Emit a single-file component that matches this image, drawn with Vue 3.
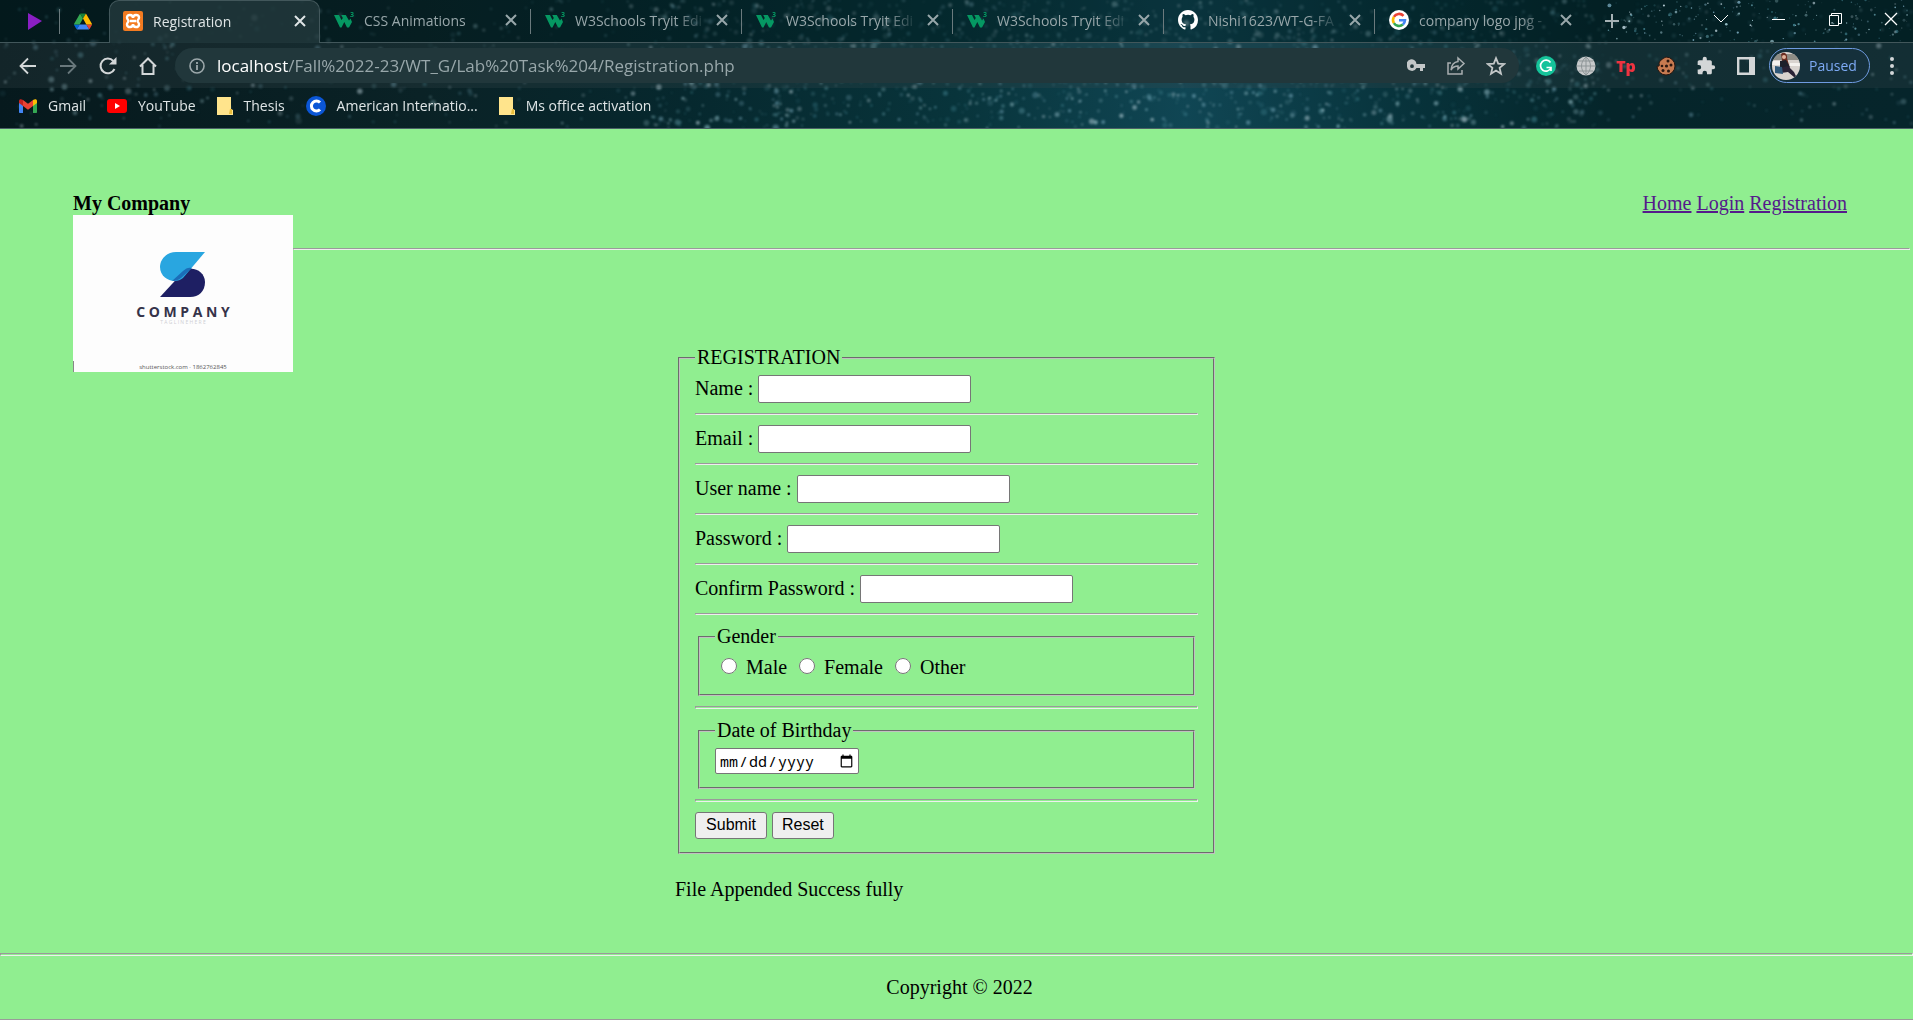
<script setup>
import { ref } from 'vue'

let seed = 20221
const rand = () => {
  seed = (seed * 16807) % 2147483647
  return seed / 2147483647
}
const tones = ['#a9d3dc', '#5f98a4', '#7fb0c4', '#3f7f8c', '#c9dfe8']
const makeStars = (count, minR, spanR, top, bottom, soft, from = 0, to = 100) =>
  Array.from({ length: count }, (_, i) => ({
    x: (from + rand() * (to - from)).toFixed(2) + '%',
    y: (top + rand() * (bottom - top)).toFixed(1),
    r: (minR + rand() * rand() * spanR).toFixed(2),
    o: (0.1 + rand() * soft).toFixed(2),
    c: tones[i % tones.length],
  }))
const softStars = [
  ...makeStars(900, 1, 2.4, 0, 128, 0.36),
  ...makeStars(1300, 1, 2.4, 0, 128, 0.45, 34, 84),
]
const sharpStars = makeStars(200, 0.5, 1.6, 0, 42, 0.8, 84, 100)

const tabs = [
  { icon: 'xampp', title: 'Registration', active: true },
  { icon: 'w3', title: 'CSS Animations' },
  { icon: 'w3', title: 'W3Schools Tryit Edi', faded: true },
  { icon: 'w3', title: 'W3Schools Tryit Edi', faded: true },
  { icon: 'w3', title: 'W3Schools Tryit Edi', faded: true },
  { icon: 'github', title: 'Nishi1623/WT-G-FA', faded: true },
  { icon: 'google', title: 'company logo jpg -', faded: true },
]

const fields = [
  { id: 'name', label: 'Name :', type: 'text' },
  { id: 'email', label: 'Email :', type: 'text' },
  { id: 'username', label: 'User name :', type: 'text' },
  { id: 'password', label: 'Password :', type: 'password' },
  { id: 'confirm', label: 'Confirm Password :', type: 'password' },
]
const genders = ['Male', 'Female', 'Other']
const gender = ref('')
</script>

<template>
  <div class="window">
    <header class="chrome">
      <svg class="sky" aria-hidden="true">
        <g class="soft">
          <circle v-for="(s, i) in softStars" :key="i" :cx="s.x" :cy="s.y" :r="s.r" :fill="s.c" :opacity="s.o" />
        </g>
        <rect class="strip" x="0" y="0" width="100%" height="42" />
        <circle v-for="(s, i) in sharpStars" :key="'s' + i" :cx="s.x" :cy="s.y" :r="s.r" :fill="s.c" :opacity="s.o" />
      </svg>

      <div class="tabstrip">
        <div class="pinned">
          <button class="pin" aria-label="Pinned video tab">
            <svg width="20" height="20" viewBox="0 0 20 20"><path d="M3 2l14 8-14 9z" fill="#8a1fc4" /></svg>
          </button>
          <button class="pin" aria-label="Pinned drive tab">
            <svg width="18" height="17" viewBox="0 0 87.3 78">
              <path d="M6.6 66.85l3.85 6.65c.8 1.4 1.95 2.5 3.3 3.3L27.5 53H0c0 1.55.4 3.1 1.2 4.5z" fill="#0066da" />
              <path d="M43.65 25L29.9 1.2c-1.35.8-2.5 1.9-3.3 3.3L1.2 48.5C.4 49.9 0 51.45 0 53h27.5z" fill="#34a853" />
              <path d="M43.65 25L57.4 1.2C56.05.4 54.5 0 52.9 0H34.4c-1.6 0-3.15.45-4.5 1.2z" fill="#188038" />
              <path d="M59.8 53H27.5L13.75 76.8c1.35.8 2.9 1.2 4.5 1.2h50.8c1.6 0 3.15-.45 4.5-1.2z" fill="#4285f4" />
              <path d="M73.55 76.8c1.35-.8 2.5-1.9 3.3-3.3l9.25-16c.8-1.4 1.2-2.95 1.2-4.5H59.8z" fill="#ea4335" />
              <path d="M73.4 26.5l-12.7-22c-.8-1.4-1.95-2.5-3.3-3.3L43.65 25 59.8 53h27.45c0-1.55-.4-3.1-1.2-4.5z" fill="#ffba00" />
            </svg>
          </button>
        </div>
        <div class="tabs">
          <div v-for="(t, i) in tabs" :key="i" class="tab" :class="{ active: t.active }">
            <svg v-if="t.icon === 'xampp'" width="20" height="20" viewBox="0 0 20 20">
              <rect width="20" height="20" rx="2" fill="#f37b21" />
              <path d="M10 7C10 3 4 3 4 6.500c0 2 1.500 2.500 1.500 3.500S4 11.500 4 13.500C4 17 10 17 10 13M10 7c0-4 6-4 6-.5 0 2-1.500 2.500-1.500 3.500s1.500 1.500 1.500 3.500c0 3.500-6 3.500-6-.5M7 10h6" fill="none" stroke="#fff" stroke-width="2.400" />
            </svg>
            <svg v-else-if="t.icon === 'w3'" width="20" height="20" viewBox="0 0 20 20">
              <path d="M0 5h5l2.500 5L8.800 8 7.200 5h4.600L15 10.500l1.500-2L18 12l-3 5.500h-2L10.300 12 7.500 17.500H6z" fill="#059862" />
              <text x="16" y="7" fill="#059862" class="three">3</text>
            </svg>
            <svg v-else-if="t.icon === 'github'" width="20" height="20" viewBox="0 0 16 16">
              <path fill="#fff" d="M8 0C3.580 0 0 3.580 0 8c0 3.540 2.290 6.530 5.470 7.590.4.070.55-.17.55-.38 0-.19-.01-.82-.01-1.490-2.010.37-2.530-.49-2.690-.94-.09-.23-.48-.94-.82-1.130-.28-.15-.68-.52-.01-.53.63-.01 1.080.58 1.230.82.72 1.210 1.870.87 2.330.66.070-.52.28-.87.51-1.070-1.780-.2-3.640-.89-3.640-3.950 0-.87.31-1.590.82-2.150-.08-.2-.36-1.020.08-2.120 0 0 .67-.21 2.200.82a7.600 7.600 0 014 0c1.530-1.040 2.200-.82 2.200-.82.44 1.100.16 1.920.08 2.120.51.56.82 1.270.82 2.150 0 3.070-1.870 3.750-3.650 3.950.29.25.54.73.54 1.480 0 1.070-.01 1.930-.01 2.200 0 .21.15.46.55.38A8.010 8.010 0 0016 8c0-4.420-3.580-8-8-8z" />
            </svg>
            <svg v-else width="20" height="20" viewBox="0 0 20 20">
              <circle cx="10" cy="10" r="10" fill="#fff" />
              <g fill="none" stroke-width="2.600">
                <path d="M14.500 5.800A6 6 0 004.900 6.900" stroke="#ea4335" />
                <path d="M4.900 6.900a6 6 0 000 6.200" stroke="#fbbc05" />
                <path d="M4.900 13.100a6 6 0 009 1.400" stroke="#34a853" />
                <path d="M13.900 14.500A6 6 0 0016 10.200h-6" stroke="#4285f4" />
              </g>
            </svg>
            <span class="title" :class="{ faded: t.faded }">{{ t.title }}</span>
            <button class="close" :aria-label="'Close ' + t.title">
              <svg width="12" height="12" viewBox="0 0 12 12"><path d="M1 1l10 10M11 1L1 11" stroke="currentColor" stroke-width="2" /></svg>
            </button>
          </div>
        </div>
        <div class="strip-end">
          <button class="plus" aria-label="New tab">
            <svg width="16" height="16" viewBox="0 0 16 16"><path d="M8 1v14M1 8h14" stroke="#a5b1b4" stroke-width="2" /></svg>
          </button>
          <div class="controls">
            <button aria-label="Search tabs"><svg width="16" height="16" viewBox="0 0 16 16"><path d="M1 4l7 7 7-7" fill="none" stroke="#fff" /></svg></button>
            <button aria-label="Minimize"><svg width="14" height="14" viewBox="0 0 14 14"><path d="M1 7.500h13" stroke="#fff" /></svg></button>
            <button aria-label="Restore"><svg width="14" height="14" viewBox="0 0 14 14"><path d="M1.500 3.500h9v10h-9zM3.500 3V1.500h10v10H11" fill="none" stroke="#fff" /></svg></button>
            <button aria-label="Close window"><svg width="14" height="14" viewBox="0 0 14 14"><path d="M1 1l12 12M13 1L1 13" stroke="#fff" stroke-width="1.300" /></svg></button>
          </div>
        </div>
      </div>

      <div class="toolbar">
        <div class="navigation">
          <button aria-label="Back"><svg width="18" height="18" viewBox="0 0 18 18"><path d="M17 9H2M9 1.500L1.500 9 9 16.500" fill="none" stroke="#d3d7d8" stroke-width="1.800" /></svg></button>
          <button aria-label="Forward"><svg width="18" height="18" viewBox="0 0 18 18"><path d="M1 9h15M9 1.500L16.500 9 9 16.500" fill="none" stroke="#69787c" stroke-width="1.800" /></svg></button>
          <button aria-label="Reload"><svg width="18" height="18" viewBox="0 0 18 18"><path d="M15.500 12A7.300 7.300 0 1114.300 4" fill="none" stroke="#d3d7d8" stroke-width="2" /><path d="M17.500 0v7.500H10z" fill="#d3d7d8" /></svg></button>
          <button aria-label="Home"><svg width="18" height="18" viewBox="0 0 18 18"><path d="M1 9.500L9 1.500l8 8M3.500 8v9h11V8" fill="none" stroke="#d3d7d8" stroke-width="2" /></svg></button>
        </div>
        <div class="omnibox">
          <svg width="16" height="16" viewBox="0 0 16 16"><circle cx="8" cy="8" r="7" fill="none" stroke="#9ca8ab" stroke-width="1.600" /><path d="M8 7v5M8 4v2" stroke="#9ca8ab" stroke-width="1.800" /></svg>
          <span class="url"><b>localhost</b>/Fall%2022-23/WT_G/Lab%20Task%204/Registration.php</span>
          <div class="actions">
            <button aria-label="Passwords"><svg width="18" height="18" viewBox="0 0 18 18"><path fill="#c3c7c8" fill-rule="evenodd" d="M9.500 7A5 5 0 100 9.500a5 5 0 009.500 1.500H13v3h3v-3h2V7zM5 7.300a1.900 1.900 0 110 3.800 1.900 1.900 0 010-3.800z" /></svg></button>
            <button aria-label="Share"><svg width="20" height="20" viewBox="0 0 20 20"><path d="M5 7H2v11h14v-4M12 2l6 5.500-6 5.500v-3c-3.500 0-5.500 1.500-7 4 .5-5 3-8 7-8.500z" fill="none" stroke="#a9afb1" stroke-width="1.500" /></svg></button>
            <button aria-label="Bookmark"><svg width="20" height="20" viewBox="0 0 20 20"><path d="M10 2.200l2.200 5.500 5.900.4-4.500 3.800 1.400 5.800-5-3.200-5 3.200 1.400-5.800L1.900 8.100l5.900-.4z" fill="none" stroke="#c3c7c8" stroke-width="1.800" /></svg></button>
          </div>
        </div>
        <div class="extensions">
          <button aria-label="Grammarly"><svg width="20" height="20" viewBox="0 0 20 20"><circle cx="10" cy="10" r="10" fill="#15c39a" /><path d="M14.500 6.500A5.500 5.500 0 1015 12M10.500 11.500H15V15" fill="none" stroke="#fff" stroke-width="1.700" /></svg></button>
          <button aria-label="Web extension"><svg width="20" height="20" viewBox="0 0 20 20"><circle cx="10" cy="10" r="9.500" fill="#c6c9ca" /><path d="M10 1v18M1 10h18M3 5h14M3 15h14M10 1C4 6 4 14 10 19M10 1c6 5 6 13 0 18" fill="none" stroke="#8d9597" /></svg></button>
          <button class="tp" aria-label="Tp extension">Tp</button>
          <button aria-label="Cookies"><svg width="20" height="20" viewBox="0 0 20 20"><path d="M10 1a9 9 0 109 9c-2 1-3-1-2-2 0-3-3-5-7-7z" fill="#c67a50" stroke="#2a1710" transform="matrix(-1 0 0 1 20 0)" /><g fill="#2a1710"><circle cx="12" cy="5" r="1.500" /><circle cx="15" cy="9" r="1.500" /><circle cx="10.500" cy="10" r="1.600" /><circle cx="6" cy="10" r="1.300" /><circle cx="7" cy="14.500" r="1.500" /><circle cx="12.500" cy="15" r="1.500" /></g></svg></button>
          <button aria-label="Extensions"><svg width="20" height="20" viewBox="0 0 24 24"><path fill="#d3d6d7" d="M20.500 11H19V7c0-1.100-.9-2-2-2h-4V3.500a2.500 2.500 0 00-5 0V5H4c-1.100 0-2 .9-2 2v3.800h1.500a2.700 2.700 0 010 5.400H2V20c0 1.100.9 2 2 2h3.800v-1.500a2.700 2.700 0 015.400 0V22H17c1.100 0 2-.9 2-2v-4h1.500a2.500 2.500 0 000-5z" /></svg></button>
          <button aria-label="Side panel"><svg width="18" height="18" viewBox="0 0 18 18"><path d="M1.200 1.200h15.600v15.600H1.200z" fill="none" stroke="#d3d6d7" stroke-width="2.400" /><path d="M12 1h6v16h-6z" fill="#d3d6d7" /></svg></button>
        </div>
        <button class="profile">
          <svg width="28" height="28" viewBox="0 0 28 28">
            <clipPath id="face"><circle cx="14" cy="14" r="14" /></clipPath>
            <g clip-path="url(#face)">
              <path d="M0 0h28v28H0z" fill="#d9d3cf" /><path d="M0 2h28v6H0z" fill="#8e8d86" /><path d="M0 9h8v4H0zM18 11h10v3H18z" fill="#f4f1ee" />
              <path d="M9 2c3-3 7 0 6 4l2 7-6 1z" fill="#6b2e22" /><circle cx="12" cy="5" r="2" fill="#e4b49b" />
              <path d="M8 9l6-1 4 7-2 3-8-1z" fill="#1c202b" /><path d="M8 16l8-2 6 6 3 6-3-1-6-5-7 1z" fill="#292235" />
              <path d="M3 14l7 1 1 7-8-1z" fill="#2f5778" />
            </g>
          </svg>
          <span>Paused</span>
        </button>
        <button class="menu" aria-label="Menu"><svg width="4" height="18" viewBox="0 0 4 18"><g fill="#d3d6d7"><circle cx="2" cy="2" r="2" /><circle cx="2" cy="9" r="2" /><circle cx="2" cy="16" r="2" /></g></svg></button>
      </div>

      <nav class="bookmarks" aria-label="Bookmarks">
        <a href="#"><svg width="18" height="14" viewBox="0 0 18 14"><path d="M0 2v11c0 .6.4 1 1 1h3V6z" fill="#4285f4" /><path d="M14 6v8h3c.6 0 1-.4 1-1V2z" fill="#34a853" /><path d="M4 1v6l5 3.700L14 7V1L9 4.800z" fill="#ea4335" /><path d="M14 1v6l4-3V2c0-2-2-2.500-4-1z" fill="#fbbc04" /><path d="M4 1v6L0 4V2C0 0 2-.5 4 1z" fill="#c5221f" /></svg>Gmail</a>
        <a href="#"><svg width="20" height="14" viewBox="0 0 20 14"><rect width="20" height="14" rx="3" fill="#f00" /><path d="M8 4l5 3-5 3z" fill="#fff" /></svg>YouTube</a>
        <a href="#"><svg width="16" height="18" viewBox="0 0 16 18"><path d="M0 0h14v12l2 1v5H0z" fill="#ffe48c" /><path d="M13 12h2v5h-3z" fill="#e9bd3b" /></svg>Thesis</a>
        <a href="#"><svg width="20" height="20" viewBox="0 0 20 20"><circle cx="10" cy="10" r="10" fill="#0b56d6" /><path d="M14 6.500A5 5 0 1014 13.500" fill="none" stroke="#fff" stroke-width="3" /></svg>American Internatio...</a>
        <a href="#"><svg width="16" height="18" viewBox="0 0 16 18"><path d="M0 0h14v12l2 1v5H0z" fill="#ffe48c" /><path d="M13 12h2v5h-3z" fill="#e9bd3b" /></svg>Ms office activation</a>
      </nav>
    </header>

    <div class="page">
      <div class="masthead">
        <div class="brand">
          <strong>My Company</strong>
          <svg class="logo" width="220" height="157" viewBox="0 0 220 157" role="img" aria-label="Company logo">
            <rect width="220" height="157" fill="#fdfdfd" />
            <path d="M0 146h1v11H0z" fill="#888" />
            <path d="M87 82l24-26c8-6 21 0 21 11 0 9-6 15-15 15z" fill="#1e1f63" />
            <path d="M132 37h-29c-9 0-16 7-16 15 0 12 15 18 23 11z" fill="#29a6e0" />
            <path d="M99 66l11-10c3-3 6-4 9-3l-11 10c-2 2-6 3-9 3z" fill="#1b6db8" />
            <text x="110" y="102" class="word">C O M P A N Y</text>
            <text x="110" y="109" class="tag">T A G L I N E H E R E</text>
            <text x="110" y="154" class="stock">shutterstock.com · 1862762845</text>
          </svg>
        </div>
        <nav class="links">
          <a href="#">Home</a> <a href="#">Login</a> <a href="#">Registration</a>
        </nav>
      </div>
      <hr class="divider" />

      <main>
        <form @submit.prevent>
          <fieldset class="registration">
            <legend>REGISTRATION</legend>
            <template v-for="f in fields" :key="f.id">
              <div class="row">
                <label :for="f.id">{{ f.label }}</label>
                <input :id="f.id" :type="f.type" />
              </div>
              <hr />
            </template>
            <fieldset>
              <legend>Gender</legend>
              <div class="radios">
                <label v-for="g in genders" :key="g"><input v-model="gender" type="radio" name="gender" :value="g" />{{ g }}</label>
              </div>
            </fieldset>
            <hr class="tall" />
            <fieldset>
              <legend id="birthday">Date of Birthday</legend>
              <input type="date" aria-labelledby="birthday" />
            </fieldset>
            <hr class="tall" />
            <div class="buttons">
              <button type="submit">Submit</button>
              <button type="reset">Reset</button>
            </div>
          </fieldset>
        </form>
        <p class="status">File Appended Success fully</p>
      </main>

      <hr class="tall footline" />
      <footer>Copyright © 2022</footer>
    </div>
  </div>
</template>

<style>
body {
  margin: 0;
  background: #90ee90;
}
</style>

<style scoped>
.window {
  min-height: 100vh;
  display: flex;
  flex-direction: column;
}
.window * {
  box-sizing: border-box;
}
svg {
  display: block;
  flex: none;
}

/* Browser frame */
.chrome {
  position: relative;
  overflow: hidden;
  height: 129px;
  border-bottom: 1px solid #4b6166;
  background: linear-gradient(90deg, #06191d 0%, #0a2226 22%, #06282e 36%, #08343b 50%, #104654 62%, #07323a 74%, #05252a 84%, #06252b 100%);
  font-family: "Open Sans", "Noto Sans", sans-serif;
  font-size: 14px;
  color: #dfe5e6;
}
.chrome button {
  display: flex;
  align-items: center;
  justify-content: center;
  padding: 0;
  border: 0;
  background: none;
  color: inherit;
  font: inherit;
}
.sky {
  position: absolute;
  inset: 0;
  width: 100%;
  height: 100%;
}
.soft {
  filter: blur(1px);
}
.strip {
  fill: #00181c;
  opacity: 0.4;
}
.tabstrip,
.toolbar,
.bookmarks {
  position: relative;
  display: flex;
  align-items: center;
}
.tabstrip {
  height: 43px;
}
.pinned {
  display: flex;
  width: 109px;
  height: 43px;
  padding-left: 11px;
  border-bottom: 1px solid #42575b;
}
.pin {
  width: 48px;
}
.pin + .pin {
  position: relative;
}
.pin + .pin::before {
  content: "";
  position: absolute;
  left: 0;
  top: 9px;
  height: 25px;
  border-left: 1px solid #6b7a7d;
}
.tabs {
  display: flex;
}
.tab {
  position: relative;
  display: flex;
  align-items: center;
  width: 211px;
  height: 43px;
  padding: 0 14px 2px 14px;
  border-bottom: 1px solid #42575b;
  color: #98a7aa;
}
.tab:not(.active)::after {
  content: "";
  position: absolute;
  right: 0;
  top: 9px;
  height: 25px;
  border-right: 1px solid #6b7a7d;
}
.tab:last-child::after {
  display: none;
}
.tab.active {
  border: 1px solid #42575b;
  border-bottom: 0;
  border-radius: 10px 10px 0 0;
  padding: 0 13px 2px 13px;
  background: rgba(38, 60, 64, 0.75);
  color: #dfe5e6;
}
.title {
  flex: 1;
  min-width: 0;
  margin: 0 8px 0 10px;
  white-space: nowrap;
}
.title.faded {
  mask-image: linear-gradient(90deg, #000 75%, transparent);
}
.three {
  font-size: 7px;
  font-weight: 700;
}
.strip-end {
  flex: 1;
  display: flex;
  align-items: flex-start;
  justify-content: space-between;
  height: 43px;
  padding-left: 8px;
  border-bottom: 1px solid #42575b;
}
.plus {
  width: 36px;
  height: 42px;
}
.controls {
  display: flex;
  height: 37px;
}
.controls button {
  width: 57px;
}
.controls button:last-child {
  width: 44px;
  margin-left: 6px;
}
.toolbar {
  height: 45px;
  background: rgba(60, 75, 78, 0.25);
}
.navigation {
  display: flex;
  padding-left: 8px;
}
.navigation button,
.extensions button,
.actions button {
  width: 40px;
  height: 35px;
}
.omnibox {
  flex: 1;
  display: flex;
  align-items: center;
  height: 35px;
  margin-left: 7px;
  padding: 0 3px 0 14px;
  border-radius: 18px;
  background: #21373b;
}
.url {
  margin-left: 12px;
  font-size: 17px;
  color: #98a7aa;
}
.url b {
  font-weight: 400;
  color: #fff;
}
.actions {
  display: flex;
  margin-left: auto;
}
.extensions {
  display: flex;
  margin-left: 7px;
}
.extensions .tp {
  font-size: 16px;
  font-weight: 800;
  color: #ef3340;
}
.chrome .profile {
  justify-content: flex-start;
  gap: 9px;
  width: 101px;
  height: 35px;
  margin-left: 3px;
  padding-left: 2px;
  border: 1px solid #6f9be0;
  border-radius: 18px;
  background: #15303b;
  color: #7daaf5;
}
.menu {
  width: 43px;
  height: 35px;
}
.bookmarks {
  gap: 21px;
  height: 36px;
  padding: 0 0 1px 19px;
}
.bookmarks a {
  display: flex;
  align-items: center;
  gap: 11px;
  color: #dfe5e6;
  text-decoration: none;
}

/* Web page */
.page {
  flex: 1;
  display: flex;
  flex-direction: column;
  background: #90ee90;
  font: 20px/23px "Liberation Serif", "Times New Roman", serif;
  color: #000;
}
.masthead {
  display: flex;
  justify-content: space-between;
  height: 119px;
  padding: 63px 66px 0 73px;
}
.word {
  font: 700 14px "Open Sans", sans-serif;
  fill: #35334a;
  text-anchor: middle;
}
.tag {
  font: 5px "Open Sans", sans-serif;
  fill: #cfcfd4;
  text-anchor: middle;
}
.stock {
  font: 6px "Open Sans", sans-serif;
  fill: #555;
  text-anchor: middle;
}
.links a {
  color: #551a8b;
}
hr {
  margin: 10px 0;
  border: 1px solid;
  border-color: #9a9a9a #eee #eee #9a9a9a;
}
hr.tall {
  height: 3px;
}
hr.divider {
  margin: 0 3px 0 293px;
}
hr.footline {
  width: 100%;
  margin: 52px 0 0;
}
main {
  width: 543px;
  margin: 96px auto 0 675px;
}
fieldset {
  margin: 0 3px;
  padding: 6px 15px 13px;
  border: 2px groove #c0c0c0;
}
legend {
  padding: 0 2px;
}
.row {
  display: flex;
  align-items: center;
  height: 28px;
}
.row label {
  padding-bottom: 2px;
}
.row input {
  width: 213px;
  height: 28px;
  margin-left: 5px;
}
.row input,
input[type="date"] {
  padding: 1px 2px;
  border: 1px solid #767676;
  border-radius: 2px;
  background: #fff;
}
.radios {
  display: flex;
  gap: 12px;
  height: 27px;
  padding-left: 6px;
}
.radios label {
  display: flex;
  align-items: center;
}
.radios input {
  width: 16px;
  height: 16px;
  margin: 0 9px 3px 0;
}
input[type="date"] {
  display: block;
  width: 144px;
  height: 26px;
  padding-left: 3px;
  font: 15px "Noto Sans Mono", "DejaVu Sans Mono", monospace;
}
.buttons {
  display: flex;
  gap: 5px;
}
.buttons button {
  height: 27px;
  padding: 0 9px 2px;
  border: 1px solid #767676;
  border-radius: 3px;
  background: #efefef;
  font: 16px "Liberation Sans", Arial, sans-serif;
  color: #000;
}
.buttons button:first-child {
  width: 72px;
}
.status {
  margin: 24px 0 0;
}
footer {
  padding: 20px 0 20px 6px;
  border-bottom: 1px solid #9a9a9a;
  text-align: center;
}
</style>
